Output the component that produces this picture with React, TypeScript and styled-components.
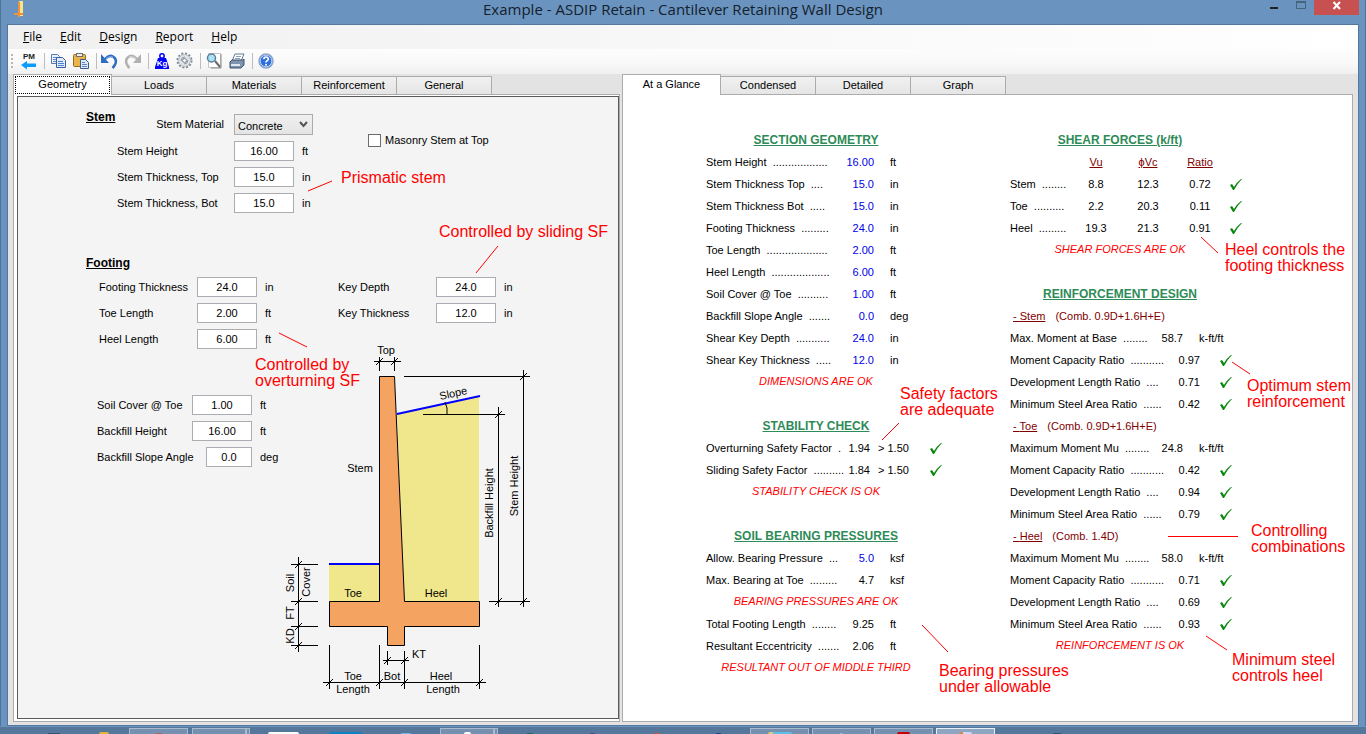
import React from "react";
import styled, { createGlobalStyle } from "styled-components";

const GlobalStyle = createGlobalStyle`
  * { box-sizing: border-box; }
  body {
    margin: 0;
    background: #6a94bf;
    color: #000;
    font-family: "Liberation Sans", Arial, sans-serif;
    font-size: 11px;
    line-height: 22px;
  }
  input, select, button { font: inherit; color: inherit; }
`;

/* ---------- window frame ---------- */

const Desktop = styled.div`
  min-height: 100vh;
  display: flex;
  flex-direction: column;
  border-left: 1px solid #4f7397;
  border-right: 1px solid #4f7397;
`;

const TitleBar = styled.header`
  display: grid;
  grid-template-columns: 1fr auto 1fr;
  height: 24px;
  padding: 0 6px;
`;

const Title = styled.h1`
  margin: 0;
  font: 400 15px/19px "Open Sans", "Noto Sans", sans-serif;
  color: #14202c;
`;

const WindowButtons = styled.div`
  display: flex;
  justify-content: flex-end;
  align-items: flex-start;
`;

const WindowButton = styled.button<{ $close?: boolean }>`
  width: ${(p) => (p.$close ? 45 : 27)}px;
  height: 15px;
  padding: 0;
  border: 0;
  display: flex;
  justify-content: center;
  background: ${(p) => (p.$close ? "#c75050" : "transparent")};
`;

const Client = styled.main`
  flex: 1;
  display: flex;
  flex-direction: column;
  margin: 0 6px 0 6px;
  border: 1px solid #53779d;
  background: #e3e3e3;
`;

const MenuBar = styled.nav`
  display: flex;
  height: 24px;
  padding-left: 7px;
  background: linear-gradient(90deg, #f0f0f0, #fff);
`;

const MenuButton = styled.button`
  padding: 0 8px;
  margin-right: 2px;
  border: 0;
  background: none;
  font: 12px/22px "Open Sans", "Noto Sans", sans-serif;
  &::first-letter { text-decoration: underline; }
`;

const ToolBar = styled.div`
  display: flex;
  align-items: center;
  height: 25px;
  padding: 0 0 2px 3px;
  background: linear-gradient(180deg, #fdfdfd, #f8f8f8 60%, #f0f0f0);
`;

const Grip = styled.span`
  width: 2px;
  height: 14px;
  margin-right: 4px;
  background: repeating-linear-gradient(180deg, #b8b8b8 0 2px, transparent 2px 4px);
`;

const ToolButton = styled.button`
  width: 23px;
  height: 22px;
  padding: 0;
  border: 0;
  display: flex;
  align-items: center;
  justify-content: center;
  background: none;
`;

const Separator = styled.span`
  width: 1px;
  height: 16px;
  margin: 0 1px 0 4px;
  background: #bdbdbd;
`;

/* ---------- tabs and panes ---------- */

const Panes = styled.div`
  flex: 1;
  display: flex;
  gap: 2px;
  padding: 1px 5px 3px 5px;
`;

const Pane = styled.section<{ $grow: number }>`
  flex: ${(p) => p.$grow} 1 0;
  display: flex;
  flex-direction: column;
  min-width: 0;
`;

const TabStrip = styled.div`
  display: flex;
  align-items: flex-end;
  height: 19px;
`;

const Tab = styled.button<{ $selected?: boolean; $dotted?: boolean; $wide?: boolean }>`
  position: relative;
  width: ${(p) => (p.$wide ? 99 : 95)}px;
  height: ${(p) => (p.$selected ? 21 : 18)}px;
  padding: 0 0 ${(p) => (p.$selected ? 2 : 0)}px;
  border: 1px solid #acacac;
  border-bottom: 0;
  border-left-width: ${(p) => (p.$selected ? 1 : 0)}px;
  background: ${(p) => (p.$selected ? "#fff" : "linear-gradient(180deg, #f1f1f1, #e5e5e5)")};
  line-height: 17px;
  margin-bottom: ${(p) => (p.$selected ? -1 : 0)}px;
  &::after {
    content: "";
    position: absolute;
    inset: 1px;
    border: ${(p) => (p.$dotted ? "1px dotted #000" : "0")};
  }
`;

const PaneBody = styled.div`
  flex: 1;
  display: flex;
  flex-direction: column;
  border: 1px solid #acacac;
  background: #fff;
`;

const Sheet = styled.div`
  position: relative;
  flex: 1;
`;

const InputSheet = styled(Sheet)`
  margin: 1px 0 2px 3px;
  padding: 10px 0 10px 68px;
  border: 1px solid #5a5a5a;
  background: #f4f4f4;
`;

const ReportSheet = styled(Sheet)`
  display: flex;
  gap: 84px;
  padding: 34px 0 0 83px;
`;

/* ---------- input form ---------- */

const GroupTitle = styled.h2`
  margin: 0;
  font: 700 12px/20px "Liberation Sans", Arial, sans-serif;
  text-decoration: underline;
`;

const StemGroup = styled.div`
  display: flex;
  align-items: flex-start;
  margin-bottom: 40px;
`;

const StemFields = styled.div`
  display: flex;
  flex-direction: column;
  gap: 6px;
  width: 251px;
  padding-top: 7px;
`;

const FieldRow = styled.div`
  display: flex;
  align-items: flex-start;
`;

const FieldLabel = styled.label<{ $w: number; $right?: boolean }>`
  width: ${(p) => p.$w}px;
  padding-right: ${(p) => (p.$right ? 10 : 0)}px;
  text-align: ${(p) => (p.$right ? "right" : "left")};
  line-height: 20px;
  white-space: nowrap;
`;

const NumberBox = styled.input<{ $narrow?: boolean }>`
  width: ${(p) => (p.$narrow ? 46 : 60)}px;
  height: 20px;
  padding: 0;
  border: 1px solid #abadb3;
  background: #fff;
  text-align: center;
`;

const Unit = styled.span`
  margin-left: 8px;
  line-height: 20px;
`;

const SelectWrap = styled.div`
  display: flex;
  align-items: center;
  width: 79px;
  height: 21px;
  svg { margin-left: -14px; pointer-events: none; }
`;

const Select = styled.select`
  appearance: none;
  width: 79px;
  height: 21px;
  padding: 0 3px 2px;
  border: 1px solid #acacac;
  border-radius: 0;
  background: linear-gradient(180deg, #f0f0f0, #e4e4e4);
  flex: none;
`;

const CheckLabel = styled.label`
  display: flex;
  align-items: center;
  gap: 4px;
  margin-top: 23px;
  line-height: 20px;
`;

const CheckBox = styled.input`
  appearance: none;
  width: 13px;
  height: 13px;
  margin: 0;
  border: 1px solid #6b6b6b;
  background: #fff;
`;

const FootingGroup = styled.div`
  display: flex;
  align-items: flex-start;
  padding: 4px 0 0 11px;
`;

const FootingColumn = styled.div`
  width: 187px;
`;

const Fields = styled.div<{ $indent?: number }>`
  display: flex;
  flex-direction: column;
  gap: 6px;
  padding-left: ${(p) => p.$indent ?? 0}px;
`;

const SoilFields = styled(Fields)`
  margin-top: 46px;
`;

const Diagram = styled.svg`
  display: block;
  margin-top: 20px;
`;

/* ---------- report ---------- */

const ReportColumn = styled.div`
  width: 220px;
`;

const ReportTitle = styled.h2`
  margin: 0;
  font: 700 12px/22px "Liberation Sans", Arial, sans-serif;
  color: #2e8b57;
  text-align: center;
  text-decoration: underline;
  white-space: nowrap;
`;

const Verdict = styled.p`
  margin: 0;
  line-height: 20px;
  font-style: italic;
  color: #f00;
  text-align: center;
  white-space: nowrap;
`;

const Block = styled.section`
  margin-bottom: 24px;
`;

const DataTable = styled.table<{ $w: number }>`
  width: ${(p) => p.$w}px;
  table-layout: fixed;
  border-collapse: collapse;
  white-space: nowrap;
  th, td { padding: 0; height: 22px; font-weight: 400; text-align: left; }
`;

const SpacedTable = styled(DataTable)`
  margin-top: 2px;
`;

const NumCell = styled.td<{ $input?: boolean }>`
  && { text-align: right; }
  color: ${(p) => (p.$input ? "#0000e6" : "#000")};
`;

const CenterCell = styled.td`
  && { text-align: center; }
`;

const ColumnHead = styled.th`
  && { text-align: center; }
  color: #800000;
  text-decoration: underline;
`;

const UnitCell = styled.td`
  && { padding-left: 16px; }
`;

const LimitCell = styled.td`
  && { padding-left: 8px; }
`;

const CheckCell = styled.td<{ $near?: boolean }>`
  && { padding-left: ${(p) => (p.$near ? 4 : 20)}px; }
  svg { display: block; }
`;

const CombLine = styled.h3`
  display: flex;
  gap: 10px;
  margin: 0;
  padding-left: 3px;
  font: 400 11px/22px "Liberation Sans", Arial, sans-serif;
  color: #800000;
`;

/* ---------- review notes over the sheets ---------- */

const Note = styled.p<{ $x: number; $y: number }>`
  position: absolute;
  left: ${(p) => p.$x}px;
  top: ${(p) => p.$y}px;
  margin: 0;
  font-size: 16px;
  line-height: 16px;
  color: #f00;
  white-space: pre;
`;

const Leaders = styled.svg`
  position: absolute;
  left: 0;
  top: 0;
  width: 100%;
  height: 100%;
  fill: none;
  stroke: #f00;
  pointer-events: none;
`;

/* ---------- task bar ---------- */

const TaskBar = styled.footer`
  display: flex;
  height: 8px;
  margin: 0 -1px;
  padding-top: 1px;
  border-top: 1px solid #6a94bf;
  background: #54779b;
  overflow: hidden;
`;

const TaskItem = styled.div<{ $w: number; $gap: number; $kind?: "open" | "active" }>`
  flex: none;
  display: flex;
  justify-content: center;
  align-items: flex-end;
  width: ${(p) => p.$w}px;
  margin-left: ${(p) => p.$gap}px;
  border: ${(p) =>
    p.$kind === "active" ? "1px solid #e8eef5" : p.$kind === "open" ? "1px solid #a9bacd" : "0"};
  border-bottom: 0;
  background: ${(p) => (p.$kind === "active" ? "#8fa6c3" : p.$kind === "open" ? "#7590b0" : "none")};
`;

const TaskIcon = styled.span<{ $w: number; $h: number; $c: string }>`
  flex: none;
  width: ${(p) => p.$w}px;
  height: ${(p) => p.$h}px;
  border-radius: 2px 2px 0 0;
  background: ${(p) => p.$c};
`;

/* ---------- drawings ---------- */

const AppIcon = () => (
  <svg width="18" height="24" viewBox="-6 0 18 24" aria-hidden="true">
    <path d="M6 1h4v15H6z" fill="#fbe38a" />
    <path d="M5 2h2v11h3v2H7v2H5v-2H1v-2h4z" fill="#f0923c" />
  </svg>
);

const Tick = () => (
  <svg width="12" height="11" viewBox="0 0 12 11" role="img" aria-label="OK">
    <path d="M0 6 2 5 4 8Q7 3 11 0L12 0Q7 5 4 11L3 11Z" fill="#0a870f" />
  </svg>
);

const icons: Record<string, React.ReactNode> = {
  pm: (
    <svg width="18" height="18" viewBox="0 0 18 18">
      <text x="9" y="7" textAnchor="middle" fontSize="8" fontWeight="700" fill="#222">PM</text>
      <path d="M1 13 7 9v2.500h9v3.500H7v2.500z" fill="#0c9bff" />
    </svg>
  ),
  copy: (
    <svg width="16" height="16" viewBox="0 0 16 16">
      <path d="M1.500 1.500h6l2 2v7h-8z" fill="#e6effa" stroke="#5b7cae" />
      <path d="M3 4.500h4M3 6.500h4M3 8.500h3" stroke="#5f8ed0" />
      <path d="M6.500 4.500h6l3 3v7h-9z" fill="#dfeafa" stroke="#3c5f9b" />
      <path d="M8 8.500h5M8 10.500h6M8 12.500h6" stroke="#4f83cf" />
    </svg>
  ),
  paste: (
    <svg width="16" height="16" viewBox="0 0 16 16">
      <rect x="0.500" y="1.500" width="12" height="12" rx="1" fill="#eab44c" stroke="#9a6a1c" />
      <rect x="3.500" y="0.500" width="6" height="3" fill="#eee" stroke="#6d6d6d" />
      <path d="M7.500 6.500h5l3 3v6h-8z" fill="#dde9f8" stroke="#3d5c87" />
      <path d="M9 9.500h3M9 11.500h5M9 13.500h5" stroke="#6188bd" />
    </svg>
  ),
  undo: (
    <svg width="17" height="16" viewBox="0 0 17 16">
      <path d="M0 1v9h8z" fill="#2f6cc4" />
      <path d="M4 6Q8 1.500 12 3.500 16 6 14.500 10.500 13.500 13 11.500 15" fill="none" stroke="#2f6cc4" strokeWidth="2.500" />
      <path d="M5 5.500Q8.500 2.500 12 4" fill="none" stroke="#7fb0ea" />
    </svg>
  ),
  redo: (
    <svg width="17" height="16" viewBox="0 0 17 16">
      <path d="M17 1v9H9z" fill="#b0b0b0" />
      <path d="M13 6Q9 1.500 5 3.500 1 6 2.500 10.500 3.500 13 5.500 15" fill="none" stroke="#b0b0b0" strokeWidth="2.500" />
      <path d="M12 5.500Q8.500 2.500 5 4" fill="none" stroke="#d4d4d4" />
    </svg>
  ),
  kg: (
    <svg width="16" height="16" viewBox="0 0 16 16">
      <circle cx="8" cy="3" r="2.200" fill="none" stroke="#00f" strokeWidth="1.500" />
      <path d="M4 5h8l3 9v2H1v-2z" fill="#00f" />
      <text x="8" y="13" textAnchor="middle" fontSize="8" fontWeight="700" fill="#fff">Kg</text>
    </svg>
  ),
  gear: (
    <svg width="17" height="17" viewBox="0 0 17 17">
      <circle cx="8.500" cy="8.500" r="7" fill="none" stroke="#7f8790" strokeWidth="2" strokeDasharray="2 1.700" />
      <circle cx="8.500" cy="8.500" r="6" fill="#dfe3e7" stroke="#b4bac0" />
      <path d="M5 9Q5 5 9 5M12 8q0 4-4 4" fill="none" stroke="#8f979f" />
      <circle cx="8.500" cy="8.500" r="2" fill="#f6f6f6" stroke="#7f8790" />
    </svg>
  ),
  preview: (
    <svg width="16" height="16" viewBox="0 0 16 16">
      <path d="M2.500.5h12v14h-12z" fill="#fff" stroke="#c4c4c4" />
      <path d="M15 1v14H5" fill="none" stroke="#8b8b8b" />
      <circle cx="5.500" cy="5" r="4" fill="#a8e4f5" stroke="#5f7d9a" strokeWidth="1.500" />
      <path d="m9 8 5 6" stroke="#6a6a6a" strokeWidth="2" />
    </svg>
  ),
  print: (
    <svg width="16" height="16" viewBox="0 0 16 16">
      <path d="M6 1h9l-3 7H3z" fill="#fff" stroke="#667a94" />
      <path d="M7 3.500h5M6 5.500h5" stroke="#8aa3c4" />
      <path d="M1 9 3 7h11l1-1v6l-3 3H1z" fill="#7e93ae" stroke="#3c506b" />
      <path d="M2 11h9v2H2z" fill="#dfe8f2" />
    </svg>
  ),
  help: (
    <svg width="16" height="16" viewBox="0 0 16 16">
      <circle cx="8" cy="8" r="7" fill="#2f6fdd" stroke="#8da5cc" strokeWidth="1.500" />
      <circle cx="8" cy="8" r="5.800" fill="none" stroke="#dbe8fb" strokeWidth="0.800" />
      <path d="M5.800 6.200Q6 4 8 4t2.300 2Q10.200 7.200 8.800 8 8 8.500 8 9.500" fill="none" stroke="#fff" strokeWidth="1.700" />
      <circle cx="8" cy="11.800" r="1" fill="#fff" />
    </svg>
  ),
};

const tools: (string | null)[] = [
  "pm", null, "copy", "paste", null, "undo", "redo", null, "kg", "gear", null, "preview", "print", null, "help",
];

/* Dimension-line ticks: short slashes where a dimension meets its extension line. */
const slashes: [number, number][] = [
  [379, 361], [394, 361], [523, 376], [498, 414], [498, 601], [523, 601],
  [298, 564], [298, 601], [298, 626], [298, 645],
  [329, 682], [379, 682], [404, 682], [479, 682], [387, 660], [404, 660],
];

const WallDiagram = () => (
  <Diagram width="250" height="357" viewBox="284 343 250 357" role="img" aria-label="Cantilever wall dimensions">
    <path d="M397 414 479 396V601H404z" fill="#f0e68c" />
    <path d="M329 564H379V601H329z" fill="#f0e68c" />
    <path
      d="M379.500 376.500H394.500L404.500 601.500H479.500V626.500H404.500V645.500H387.500V626.500H329.500V601.500H379.500Z"
      fill="#f4a460"
      stroke="#000"
    />
    <path d="M397 414 480 396M329 564H379" stroke="#00f" strokeWidth="2" />
    <g fill="none" stroke="#000" shapeRendering="crispEdges">
      <path d="M374 361.500H401M379.500 357V371M394.500 357V371" />
      <path d="M404 376.500H530M523.500 370V607M498.500 407V607M423 414.500H505M489 601.500H530" />
      <path d="M298.500 557V652M291 564.500H318M291 601.500H318M291 626.500H318M291 645.500H318" />
      <path d="M329.500 645V689M379.500 645V689M404.500 651V689M479.500 645V689M323 682.500H486" />
      <path d="M383 660.500H409M387.500 651V665" />
    </g>
    <path d="M445 402Q448 408 447 414" fill="none" stroke="#000" />
    <path d={slashes.map(([x, y]) => `M${x - 3} ${y + 4}l7-7`).join("")} stroke="#000" />
    <g fontSize="11" textAnchor="middle">
      <text x="386" y="354">Top</text>
      <text x="360" y="472">Stem</text>
      <text transform="translate(454 397) rotate(-12)">Slope</text>
      <text transform="translate(493 503) rotate(-90)">Backfill Height</text>
      <text transform="translate(518 486) rotate(-90)">Stem Height</text>
      <text transform="translate(294 583) rotate(-90)">Soil</text>
      <text transform="translate(310 582) rotate(-90)">Cover</text>
      <text transform="translate(294 613) rotate(-90)">FT</text>
      <text transform="translate(294 636) rotate(-90)">KD</text>
      <text x="353" y="597">Toe</text>
      <text x="436" y="597">Heel</text>
      <text x="419" y="658">KT</text>
      <text x="353" y="680">Toe</text>
      <text x="353" y="693">Length</text>
      <text x="392" y="680">Bot</text>
      <text x="441" y="680">Heel</text>
      <text x="443" y="693">Length</text>
    </g>
  </Diagram>
);

/* ---------- composed parts ---------- */

type FieldProps = { id: string; label: string; value: string; unit: string; w: number; narrow?: boolean };

const Field = ({ id, label, value, unit, w, narrow }: FieldProps) => (
  <FieldRow>
    <FieldLabel htmlFor={id} $w={w}>{label}</FieldLabel>
    <NumberBox id={id} type="text" defaultValue={value} $narrow={narrow} />
    <Unit>{unit}</Unit>
  </FieldRow>
);

type Quantity = { label: string; dots: number; value: string; unit: string; input?: boolean };

const dotted = (label: string, dots: number) => `${label}\u00a0 ${".".repeat(dots)}`;

const QuantityRows = ({ rows }: { rows: Quantity[] }) => (
  <>
    <colgroup>
      <col style={{ width: 128 }} />
      <col style={{ width: 40 }} />
      <col />
    </colgroup>
    <tbody>
      {rows.map((r) => (
        <tr key={r.label}>
          <th scope="row">{dotted(r.label, r.dots)}</th>
          <NumCell $input={r.input}>{r.value}</NumCell>
          <UnitCell>{r.unit}</UnitCell>
        </tr>
      ))}
    </tbody>
  </>
);

const geometry: Quantity[] = [
  { label: "Stem Height", dots: 18, value: "16.00", unit: "ft", input: true },
  { label: "Stem Thickness Top", dots: 4, value: "15.0", unit: "in", input: true },
  { label: "Stem Thickness Bot", dots: 5, value: "15.0", unit: "in", input: true },
  { label: "Footing Thickness", dots: 9, value: "24.0", unit: "in", input: true },
  { label: "Toe Length", dots: 20, value: "2.00", unit: "ft", input: true },
  { label: "Heel Length", dots: 19, value: "6.00", unit: "ft", input: true },
  { label: "Soil Cover @ Toe", dots: 10, value: "1.00", unit: "ft", input: true },
  { label: "Backfill Slope Angle", dots: 7, value: "0.0", unit: "deg", input: true },
  { label: "Shear Key Depth", dots: 11, value: "24.0", unit: "in", input: true },
  { label: "Shear Key Thickness", dots: 5, value: "12.0", unit: "in", input: true },
];

const pressures: Quantity[] = [
  { label: "Allow. Bearing Pressure", dots: 3, value: "5.0", unit: "ksf", input: true },
  { label: "Max. Bearing at Toe", dots: 9, value: "4.7", unit: "ksf" },
];

const resultant: Quantity[] = [
  { label: "Total Footing Length", dots: 8, value: "9.25", unit: "ft" },
  { label: "Resultant Eccentricity", dots: 7, value: "2.06", unit: "ft" },
];

const stability = [
  { label: "Overturning Safety Factor", dots: 1, value: "1.94" },
  { label: "Sliding Safety Factor", dots: 10, value: "1.84" },
];

const shear = [
  { label: "Stem", dots: 8, vu: "8.8", vc: "12.3", ratio: "0.72" },
  { label: "Toe", dots: 10, vu: "2.2", vc: "20.3", ratio: "0.11" },
  { label: "Heel", dots: 9, vu: "19.3", vc: "21.3", ratio: "0.91" },
];

const reinforcement = [
  { part: "Stem", comb: "0.9D+1.6H+E", title: "Max. Moment at Base", moment: "58.7", ratios: ["0.97", "0.71", "0.42"] },
  { part: "Toe", comb: "0.9D+1.6H+E", title: "Maximum Moment Mu", moment: "24.8", ratios: ["0.42", "0.94", "0.79"] },
  { part: "Heel", comb: "1.4D", title: "Maximum Moment Mu", moment: "58.0", ratios: ["0.71", "0.69", "0.93"] },
];

const ratioLabels: [string, number][] = [
  ["Moment Capacity Ratio", 11],
  ["Development Length Ratio", 4],
  ["Minimum Steel Area Ratio", 6],
];

const taskItems: { w: number; gap: number; kind?: "open" | "active"; iw: number; ih: number; c: string }[] = [
  { w: 16, gap: 46, iw: 12, ih: 1, c: "#33506f" },
  { w: 16, gap: 34, iw: 10, ih: 2, c: "#e3b23c" },
  { w: 59, gap: 17, kind: "open", iw: 6, ih: 1, c: "#b0605f" },
  { w: 54, gap: 4, kind: "open", iw: 0, ih: 0, c: "none" },
  { w: 4, gap: 0, kind: "open", iw: 0, ih: 0, c: "none" },
  { w: 32, gap: 17, iw: 31, ih: 2, c: "#fff" },
  { w: 34, gap: 29, iw: 33, ih: 2, c: "#0b84c6" },
  { w: 16, gap: 36, iw: 10, ih: 1, c: "#6cb8ea" },
  { w: 54, gap: 26, kind: "open", iw: 7, ih: 2, c: "#fff" },
  { w: 4, gap: 0, kind: "open", iw: 0, ih: 0, c: "none" },
  { w: 16, gap: 24, iw: 6, ih: 1, c: "#1f6a52" },
  { w: 16, gap: 46, iw: 5, ih: 1, c: "#5a3f97" },
  { w: 16, gap: 48, iw: 5, ih: 1, c: "#d8562a" },
  { w: 16, gap: 46, iw: 5, ih: 1, c: "#263f8c" },
  { w: 59, gap: 24, kind: "open", iw: 24, ih: 2, c: "linear-gradient(90deg, #d8cb7a 20%, #5cc0e6 20%)" },
  { w: 59, gap: 3, kind: "open", iw: 3, ih: 1, c: "#a9bacd" },
  { w: 59, gap: 3, kind: "open", iw: 13, ih: 2, c: "#c40000" },
  { w: 59, gap: 3, kind: "active", iw: 13, ih: 2, c: "linear-gradient(90deg, #d5894e 30%, #cfd8f5 30%)" },
  { w: 16, gap: 54, iw: 8, ih: 1, c: "#33506f" },
];

export default function App() {
  return (
    <Desktop>
      <GlobalStyle />
      <TitleBar>
        <AppIcon />
        <Title>Example - ASDIP Retain - Cantilever Retaining Wall Design</Title>
        <WindowButtons>
          <WindowButton aria-label="Minimize">
            <svg width="8" height="15"><path d="M0 7h8v2H0z" fill="#222" /></svg>
          </WindowButton>
          <WindowButton aria-label="Maximize">
            <svg width="10" height="15"><path d="M0.500 1.500h9v7h-9z" fill="none" stroke="#47647f" /><path d="M0 1h10v2H0z" fill="#47647f" /></svg>
          </WindowButton>
          <WindowButton aria-label="Close" $close>
            <svg width="10" height="15"><path d="m1.500 2 6.500 7M8 2 1.500 9" stroke="#fff" strokeWidth="2" /></svg>
          </WindowButton>
        </WindowButtons>
      </TitleBar>

      <Client>
        <MenuBar aria-label="Main menu">
          {["File", "Edit", "Design", "Report", "Help"].map((m) => (
            <MenuButton key={m}>{m}</MenuButton>
          ))}
        </MenuBar>
        <ToolBar>
          <Grip />
          {tools.map((t, i) =>
            t ? <ToolButton key={t} aria-label={t}>{icons[t]}</ToolButton> : <Separator key={i} />
          )}
        </ToolBar>

        <Panes>
          <Pane $grow={607}>
            <TabStrip role="tablist">
              <Tab role="tab" aria-selected="true" $selected $dotted $wide>Geometry</Tab>
              {["Loads", "Materials", "Reinforcement", "General"].map((t) => (
                <Tab role="tab" aria-selected="false" key={t}>{t}</Tab>
              ))}
            </TabStrip>
            <PaneBody>
              <InputSheet>
                <StemGroup>
                  <FieldLabel as="div" $w={31}><GroupTitle>Stem</GroupTitle></FieldLabel>
                  <StemFields>
                    <FieldRow>
                      <FieldLabel htmlFor="material" $w={117} $right>Stem Material</FieldLabel>
                      <SelectWrap>
                        <Select id="material" defaultValue="Concrete">
                          <option>Concrete</option>
                          <option>Masonry</option>
                        </Select>
                        <svg width="9" height="7" viewBox="0 0 9 7">
                          <path d="m1 1 3.500 4L8 1" fill="none" stroke="#555" strokeWidth="2" />
                        </svg>
                      </SelectWrap>
                    </FieldRow>
                    <Field id="stem-h" label="Stem Height" value="16.00" unit="ft" w={117} />
                    <Field id="stem-top" label="Stem Thickness, Top" value="15.0" unit="in" w={117} />
                    <Field id="stem-bot" label="Stem Thickness, Bot" value="15.0" unit="in" w={117} />
                  </StemFields>
                  <CheckLabel>
                    <CheckBox type="checkbox" />
                    Masonry Stem at Top
                  </CheckLabel>
                </StemGroup>

                <GroupTitle>Footing</GroupTitle>
                <FootingGroup>
                  <FootingColumn>
                    <Fields $indent={2}>
                      <Field id="foot-t" label="Footing Thickness" value="24.0" unit="in" w={98} />
                      <Field id="toe-l" label="Toe Length" value="2.00" unit="ft" w={98} />
                      <Field id="heel-l" label="Heel Length" value="6.00" unit="ft" w={98} />
                    </Fields>
                    <SoilFields>
                      <Field id="cover" label="Soil Cover @ Toe" value="1.00" unit="ft" w={95} />
                      <Field id="backfill" label="Backfill Height" value="16.00" unit="ft" w={95} />
                      <Field id="slope" label="Backfill Slope Angle" value="0.0" unit="deg" w={109} narrow />
                    </SoilFields>
                  </FootingColumn>
                  <div>
                    <Fields $indent={54}>
                      <Field id="key-d" label="Key Depth" value="24.0" unit="in" w={98} />
                      <Field id="key-t" label="Key Thickness" value="12.0" unit="in" w={98} />
                    </Fields>
                    <WallDiagram />
                  </div>
                </FootingGroup>

                <Leaders>
                  <path d="M290 94 314 84M480 149 458 176M261 236 289 250" />
                </Leaders>
                <Note $x={323} $y={73}>Prismatic stem</Note>
                <Note $x={421} $y={127}>Controlled by sliding SF</Note>
                <Note $x={237} $y={260}>{"Controlled by\noverturning SF"}</Note>
              </InputSheet>
            </PaneBody>
          </Pane>

          <Pane $grow={731}>
            <TabStrip role="tablist">
              <Tab role="tab" aria-selected="true" $selected $wide>At a Glance</Tab>
              {["Condensed", "Detailed", "Graph"].map((t) => (
                <Tab role="tab" aria-selected="false" key={t}>{t}</Tab>
              ))}
            </TabStrip>
            <PaneBody>
              <ReportSheet>
                <ReportColumn>
                  <Block>
                    <ReportTitle>SECTION GEOMETRY</ReportTitle>
                    <DataTable $w={220}><QuantityRows rows={geometry} /></DataTable>
                    <Verdict>DIMENSIONS ARE OK</Verdict>
                  </Block>
                  <Block>
                    <ReportTitle>STABILITY CHECK</ReportTitle>
                    <DataTable $w={240}>
                      <colgroup>
                        <col style={{ width: 140 }} />
                        <col style={{ width: 24 }} />
                        <col style={{ width: 40 }} />
                        <col />
                      </colgroup>
                      <tbody>
                        {stability.map((s) => (
                          <tr key={s.label}>
                            <th scope="row">{dotted(s.label, s.dots)}</th>
                            <NumCell>{s.value}</NumCell>
                            <LimitCell>&gt; 1.50</LimitCell>
                            <CheckCell><Tick /></CheckCell>
                          </tr>
                        ))}
                      </tbody>
                    </DataTable>
                    <Verdict>STABILITY CHECK IS OK</Verdict>
                  </Block>
                  <Block>
                    <ReportTitle>SOIL BEARING PRESSURES</ReportTitle>
                    <DataTable $w={220}><QuantityRows rows={pressures} /></DataTable>
                    <Verdict>BEARING PRESSURES ARE OK</Verdict>
                    <SpacedTable $w={220}><QuantityRows rows={resultant} /></SpacedTable>
                    <Verdict>RESULTANT OUT OF MIDDLE THIRD</Verdict>
                  </Block>
                </ReportColumn>

                <ReportColumn>
                  <Block>
                    <ReportTitle>SHEAR FORCES (k/ft)</ReportTitle>
                    <DataTable $w={236}>
                      <colgroup>
                        <col style={{ width: 60 }} />
                        <col style={{ width: 52 }} />
                        <col style={{ width: 52 }} />
                        <col style={{ width: 52 }} />
                        <col />
                      </colgroup>
                      <thead>
                        <tr>
                          <td />
                          <ColumnHead scope="col">Vu</ColumnHead>
                          <ColumnHead scope="col">ϕVc</ColumnHead>
                          <ColumnHead scope="col">Ratio</ColumnHead>
                          <td />
                        </tr>
                      </thead>
                      <tbody>
                        {shear.map((s) => (
                          <tr key={s.label}>
                            <th scope="row">{dotted(s.label, s.dots)}</th>
                            <CenterCell>{s.vu}</CenterCell>
                            <CenterCell>{s.vc}</CenterCell>
                            <CenterCell>{s.ratio}</CenterCell>
                            <CheckCell $near><Tick /></CheckCell>
                          </tr>
                        ))}
                      </tbody>
                    </DataTable>
                    <Verdict>SHEAR FORCES ARE OK</Verdict>
                  </Block>
                  <Block>
                    <ReportTitle>REINFORCEMENT DESIGN</ReportTitle>
                    {reinforcement.map((g) => (
                      <React.Fragment key={g.part}>
                        <CombLine><u>- {g.part}</u><span>(Comb. {g.comb})</span></CombLine>
                        <DataTable $w={226}>
                          <colgroup>
                            <col style={{ width: 139 }} />
                            <col style={{ width: 34 }} />
                            <col style={{ width: 17 }} />
                            <col />
                          </colgroup>
                          <tbody>
                            <tr>
                              <th scope="row">{dotted(g.title, 8)}</th>
                              <NumCell>{g.moment}</NumCell>
                              <UnitCell colSpan={2}>k-ft/ft</UnitCell>
                            </tr>
                            {ratioLabels.map(([label, dots], i) => (
                              <tr key={label}>
                                <th scope="row">{dotted(label, dots)}</th>
                                <NumCell colSpan={2}>{g.ratios[i]}</NumCell>
                                <CheckCell><Tick /></CheckCell>
                              </tr>
                            ))}
                          </tbody>
                        </DataTable>
                      </React.Fragment>
                    ))}
                    <Verdict>REINFORCEMENT IS OK</Verdict>
                  </Block>
                </ReportColumn>

                <Leaders>
                  <path d="M276 328 259 345M578 142 595 158M609 267 627 279M583 541 604 555M299 530 325 557M545 441.500H615" />
                </Leaders>
                <Note $x={277} $y={291}>{"Safety factors\nare adequate"}</Note>
                <Note $x={602} $y={147}>{"Heel controls the\nfooting thickness"}</Note>
                <Note $x={624} $y={283}>{"Optimum stem\nreinforcement"}</Note>
                <Note $x={628} $y={428}>{"Controlling\ncombinations"}</Note>
                <Note $x={609} $y={557}>{"Minimum steel\ncontrols heel"}</Note>
                <Note $x={316} $y={568}>{"Bearing pressures\nunder allowable"}</Note>
              </ReportSheet>
            </PaneBody>
          </Pane>
        </Panes>
      </Client>

      <TaskBar>
        {taskItems.map((t, i) => (
          <TaskItem key={i} $w={t.w} $gap={t.gap} $kind={t.kind}>
            <TaskIcon $w={t.iw} $h={t.ih} $c={t.c} />
          </TaskItem>
        ))}
      </TaskBar>
    </Desktop>
  );
}
